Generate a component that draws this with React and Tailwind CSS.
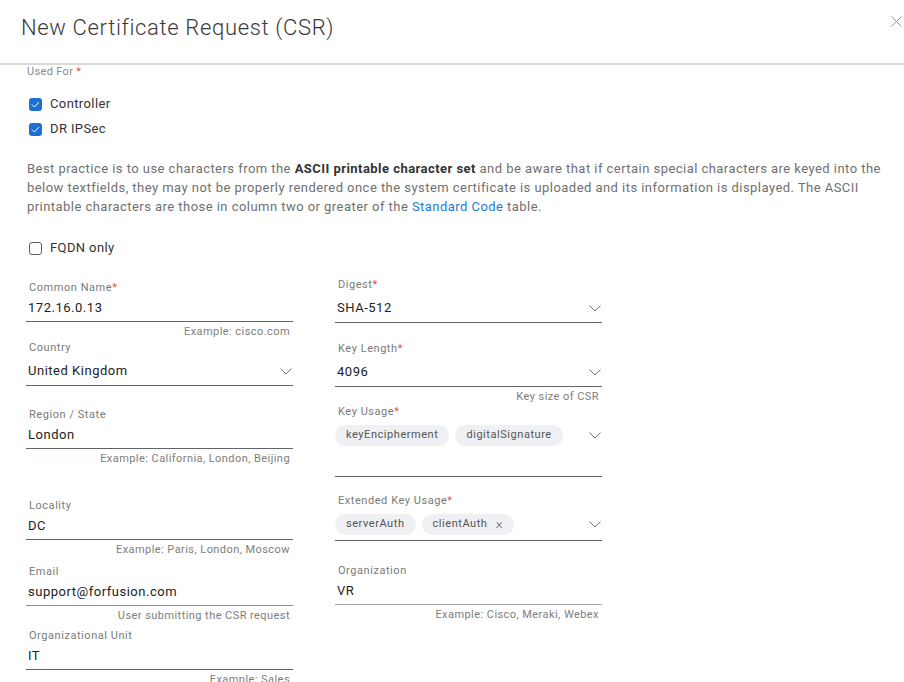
import React from 'react';

const Chevron = () => (
  <svg width="12" height="7" viewBox="0 0 12 7" fill="none">
    <polyline points="0.5,0.5 6,6 11.5,0.5" stroke="#6b6f75" strokeWidth="1" />
  </svg>
);

const Label = ({ children, required }) => (
  <div className="pl-[3px] text-[11px] leading-[14px] text-[#7a7a7a] tracking-[0.05em]">
    {children}
    {required && <span className="text-[#e3533d]">*</span>}
  </div>
);

const Helper = ({ children }) => (
  <div className="mt-[3px] pr-[3px] text-right text-[11px] leading-[14px] text-[#7d7d7d] tracking-[0.04em]">
    {children}
  </div>
);

const TextField = ({ label, value, helper, required, className = '', line = 'border-[#5f636a]' }) => (
  <div className={className}>
    <Label required={required}>{label}</Label>
    <div className={`mt-[4px] pl-[2px] pb-[4px] border-b ${line} text-[13px] leading-[18px] text-[#222] tracking-[0.04em]`}>
      {value}
    </div>
    {helper && <Helper>{helper}</Helper>}
  </div>
);

const SelectField = ({ label, value, helper, required, className = '' }) => (
  <div className={className}>
    <Label required={required}>{label}</Label>
    <div className="mt-[7px] pl-[2px] pr-[1px] pb-[5px] border-b border-[#5f636a] flex items-center justify-between text-[13px] leading-[18px] text-[#222] tracking-[0.04em]">
      <span>{value}</span>
      <Chevron />
    </div>
    {helper && <Helper>{helper}</Helper>}
  </div>
);

const Chip = ({ children, removable }) => (
  <span className="h-[21px] px-[11px] rounded-full bg-[#eef0f3] flex items-center gap-[8px] text-[11px] text-[#555] tracking-[0.05em]">
    {children}
    {removable && <span className="text-[14px] font-light text-[#666]">×</span>}
  </span>
);

const ChipField = ({ label, chips, className = '', pad }) => (
  <div className={className}>
    <Label required>{label}</Label>
    <div className={`mt-[6px] pr-[1px] border-b border-[#5f636a] ${pad}`}>
      <div className="flex items-center justify-between">
        <div className="flex gap-[6px]">
          {chips.map((c) => (
            <Chip key={c.name} removable={c.removable}>{c.name}</Chip>
          ))}
        </div>
        <Chevron />
      </div>
    </div>
  </div>
);

const Checkbox = ({ checked, label }) => (
  <div className="h-[20px] flex items-center gap-[8px]">
    {checked ? (
      <span className="ml-[2px] w-[13px] h-[13px] rounded-[3px] bg-[#1d6fd6] flex items-center justify-center">
        <svg width="9" height="7" viewBox="0 0 9 7" fill="none">
          <polyline points="1,3.6 3.4,6 8,1" stroke="#fff" strokeWidth="1" />
        </svg>
      </span>
    ) : (
      <span className="ml-[2px] w-[13px] h-[13px] rounded-[3px] border border-[#5b5f66] bg-white" />
    )}
    <span className="text-[13px] text-[#333] tracking-[0.03em]">{label}</span>
  </div>
);

const App = () => {
  return (
    <div className="w-[904px] h-[682px] overflow-hidden bg-white font-['Roboto','Liberation_Sans',sans-serif]">
      {/* Header */}
      <div className="h-[65px] flex items-start justify-between pl-[21px] pr-[2px] border-b-2 border-[#d9d9d9]">
        <h1 className="mt-[14px] text-[22px] leading-[28px] font-light text-[#39393b] tracking-[0.03em]">
          New Certificate Request (CSR)
        </h1>
        <button className="mt-[16px]">
          <svg width="11" height="11" viewBox="0 0 11 11" fill="none">
            <line x1="0.5" y1="0.5" x2="10.5" y2="10.5" stroke="#9a9a9a" strokeWidth="1" />
            <line x1="10.5" y1="0.5" x2="0.5" y2="10.5" stroke="#9a9a9a" strokeWidth="1" />
          </svg>
        </button>
      </div>

      <div className="pl-[27px] pr-[20px]">
        <div className="text-[11px] leading-[14px] text-[#888] tracking-[0.03em]">
          Used For <span className="text-[#e3533d]">*</span>
        </div>
        <div className="mt-[15px] flex flex-col gap-[5px]">
          <Checkbox checked label="Controller" />
          <Checkbox checked label="DR IPSec" />
        </div>

        <p className="mt-[20px] text-[13px] leading-[19px] text-[#707070] tracking-[0.035em]">
          Best practice is to use characters from the{' '}
          <span className="font-bold text-[#333]">ASCII printable character set</span> and be aware that if
          certain special characters are keyed into the below textfields, they may not be properly rendered once
          the system certificate is uploaded and its information is displayed. The ASCII printable characters are
          those in column two or greater of the <span className="text-[#1e7ad6]">Standard Code</span> table.
        </p>

        <div className="mt-[22px]">
          <Checkbox label="FQDN only" />
        </div>
      </div>

      {/* Form columns */}
      <div className="pl-[26px] mt-[20px] flex items-start gap-[42px]">
        <div className="w-[267px] pt-[3px] flex flex-col">
          <TextField label="Common Name" required value="172.16.0.13" helper="Example: cisco.com" />
          <SelectField className="mt-[2px]" label="Country" value="United Kingdom" />
          <TextField className="mt-[22px]" label="Region / State" value="London" helper="Example: California, London, Beijing" />
          <TextField className="mt-[33px]" label="Locality" value="DC" helper="Example: Paris, London, Moscow" />
          <TextField className="mt-[8px]" label="Email" value="support@forfusion.com" helper="User submitting the CSR request" line="border-[#8a8d92]" />
          <TextField className="mt-[6px]" label="Organizational Unit" value="IT" helper="Example: Sales" />
        </div>

        <div className="w-[267px] flex flex-col">
          <SelectField label="Digest" required value="SHA-512" />
          <SelectField className="mt-[19px]" label="Key Length" required value="4096" helper="Key size of CSR" />
          <ChipField
            className="mt-[1px]"
            label="Key Usage"
            pad="pb-[30px]"
            chips={[{ name: 'keyEncipherment' }, { name: 'digitalSignature' }]}
          />
          <ChipField
            className="mt-[17px]"
            label="Extended Key Usage"
            pad="pb-[5px]"
            chips={[{ name: 'serverAuth' }, { name: 'clientAuth', removable: true }]}
          />
          <TextField className="mt-[23px]" label="Organization" value="VR" helper="Example: Cisco, Meraki, Webex" line="border-[#a3a6aa]" />
        </div>
      </div>
    </div>
  );
};

export default App;
